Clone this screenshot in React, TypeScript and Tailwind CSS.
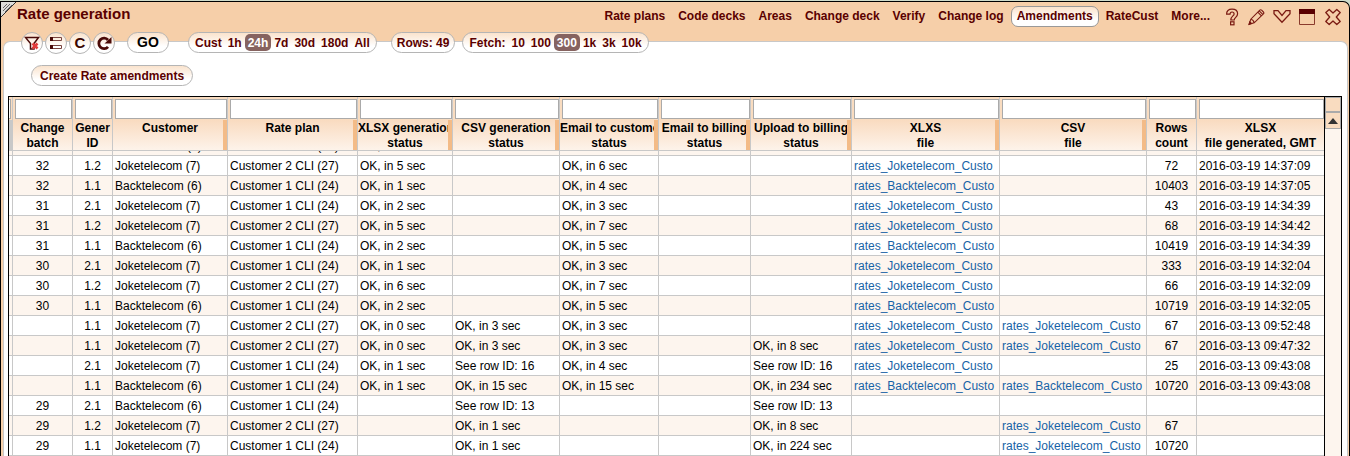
import clsx from "clsx";

type Column = {
    label: string[];
    width: string;
    center?: boolean;
    resizable?: boolean;
};

const columns: Column[] = [
    { label: ["Change", "batch"], width: "w-[60px]", center: true },
    { label: ["Gener", "ID"], width: "w-[40px]", center: true },
    { label: ["Customer"], width: "w-[115px]", resizable: true },
    { label: ["Rate plan"], width: "w-[130px]", resizable: true },
    { label: ["XLSX generation", "status"], width: "w-[95px]", resizable: true },
    { label: ["CSV generation", "status"], width: "w-[107px]", resizable: true },
    { label: ["Email to customer", "status"], width: "w-[99px]", resizable: true },
    { label: ["Email to billing", "status"], width: "w-[92px]", resizable: true },
    { label: ["Upload to billing", "status"], width: "w-[101px]", resizable: true },
    { label: ["XLXS", "file"], width: "w-[148px]", resizable: true },
    { label: ["CSV", "file"], width: "w-[147px]", resizable: true },
    { label: ["Rows", "count"], width: "w-[50px]", center: true },
    { label: ["XLSX", "file generated, GMT"], width: "" },
];

const joke = "Joketelecom (7)";
const back = "Backtelecom (6)";
const cli1 = "Customer 1 CLI (24)";
const cli2 = "Customer 2 CLI (27)";
const jokeFile = "rates_Joketelecom_Custo";
const backFile = "rates_Backtelecom_Custo";

const rows: string[][] = [
    ["", "", back, cli1, "OK, in 1 sec", "", "", "", "", "", "", "", ""],
    ["32", "1.2", joke, cli2, "OK, in 5 sec", "", "OK, in 6 sec", "", "", jokeFile, "", "72", "2016-03-19 14:37:09"],
    ["32", "1.1", back, cli1, "OK, in 1 sec", "", "OK, in 4 sec", "", "", backFile, "", "10403", "2016-03-19 14:37:05"],
    ["31", "2.1", joke, cli1, "OK, in 2 sec", "", "OK, in 3 sec", "", "", jokeFile, "", "43", "2016-03-19 14:34:39"],
    ["31", "1.2", joke, cli2, "OK, in 5 sec", "", "OK, in 7 sec", "", "", jokeFile, "", "68", "2016-03-19 14:34:42"],
    ["31", "1.1", back, cli1, "OK, in 2 sec", "", "OK, in 5 sec", "", "", backFile, "", "10419", "2016-03-19 14:34:39"],
    ["30", "2.1", joke, cli1, "OK, in 1 sec", "", "OK, in 3 sec", "", "", jokeFile, "", "333", "2016-03-19 14:32:04"],
    ["30", "1.2", joke, cli2, "OK, in 6 sec", "", "OK, in 7 sec", "", "", jokeFile, "", "66", "2016-03-19 14:32:09"],
    ["30", "1.1", back, cli1, "OK, in 2 sec", "", "OK, in 5 sec", "", "", backFile, "", "10719", "2016-03-19 14:32:05"],
    ["", "1.1", joke, cli2, "OK, in 0 sec", "OK, in 3 sec", "OK, in 3 sec", "", "", jokeFile, jokeFile, "67", "2016-03-13 09:52:48"],
    ["", "1.1", joke, cli2, "OK, in 0 sec", "OK, in 3 sec", "OK, in 3 sec", "", "OK, in 8 sec", jokeFile, jokeFile, "67", "2016-03-13 09:47:32"],
    ["", "2.1", joke, cli1, "OK, in 1 sec", "See row ID: 16", "OK, in 4 sec", "", "See row ID: 16", jokeFile, "", "25", "2016-03-13 09:43:08"],
    ["", "1.1", back, cli1, "OK, in 1 sec", "OK, in 15 sec", "OK, in 15 sec", "", "OK, in 234 sec", backFile, backFile, "10720", "2016-03-13 09:43:08"],
    ["29", "2.1", back, cli1, "", "See row ID: 13", "", "", "See row ID: 13", "", "", "", ""],
    ["29", "1.2", joke, cli2, "", "OK, in 1 sec", "", "", "OK, in 8 sec", "", jokeFile, "67", ""],
    ["29", "1.1", joke, cli1, "", "OK, in 1 sec", "", "", "OK, in 224 sec", "", jokeFile, "10720", ""],
];

const navItems = [
    "Rate plans",
    "Code decks",
    "Areas",
    "Change deck",
    "Verify",
    "Change log",
    "Amendments",
    "RateCust",
    "More...",
];

const pill = "flex h-[21px] items-center rounded-full border border-[#b5b5b5] bg-linear-to-b from-[#fae3cd] to-white to-70%";
const roundButton = "flex size-[22px] items-center justify-center rounded-full border border-[#b5b5b5] bg-linear-to-b from-[#fae3cd] to-white to-70%";

function TitleBar() {
    return (
        <header className="flex h-[39px] shrink-0 items-start justify-between pr-2 pl-4">
            <h1 className="pt-[3px] text-[15px] leading-[18px]">Rate generation</h1>
            <div className="flex items-center pt-1">
                <nav className="flex gap-px">
                    {navItems.map((item) => (
                        <a
                            key={item}
                            href="#"
                            className={clsx(
                                "h-[21px] rounded-[7px] border px-[5px] leading-[19px]",
                                item === "Amendments"
                                    ? "border-[#999] bg-linear-to-b from-[#fae3cd] to-white to-70%"
                                    : "border-transparent",
                            )}
                        >
                            {item}
                        </a>
                    ))}
                </nav>
                <div className="flex items-center gap-2 pl-2">
                    <button aria-label="Help">
                        <svg width="16" height="18" viewBox="0 0 16 18" fill="none" stroke="#7a1a12" strokeWidth="1.2">
                            <path d="M2.6 6.2C2.4 3 4.6 1.2 8 1.2s5.600 1.700 5.600 4.600c0 3.400-3.400 3.600-3.400 6.200H6.800c0-3.900 3.300-4.100 3.300-6.100C10.100 4.600 9.200 4 8 4S6 4.800 6 6.200z" />
                            <rect x="6.600" y="13.800" width="3.400" height="3" />
                        </svg>
                    </button>
                    <button aria-label="Edit">
                        <svg width="17" height="18" viewBox="0 0 17 18" fill="none" stroke="#7a1a12" strokeWidth="1.1">
                            <path d="M1.200 16.200 2.800 11.200 11.800 2.200Q12.700 1.300 13.600 2.200L15.400 4Q16.300 4.900 15.400 5.800L6.200 14.800zM2.800 11.200Q5.500 11.600 6.200 14.800M9.800 4.200l3.600 3.600M11.200 2.800l3.600 3.600" />
                            <path d="m1 16.400.800-2.600 1.800 1.800z" fill="#5a0500" />
                        </svg>
                    </button>
                    <button aria-label="Collapse">
                        <svg width="18" height="18" viewBox="0 0 18 18" fill="none" stroke="#7a1a12" strokeWidth="1.300">
                            <path d="M1 2.700h4L9 7.500l4-4.800h4v3L9 14.300 1 5.700z" />
                        </svg>
                    </button>
                    <button aria-label="Maximize">
                        <svg width="16" height="18" viewBox="0 0 16 18">
                            <path d="M.5 1.500h15v15H.5z" fill="none" stroke="#8a3a2c" />
                            <path d="M0 1h16v5H0z" fill="#5a0000" />
                        </svg>
                    </button>
                    <button aria-label="Close" className="pl-0.5">
                        <svg width="16" height="18" viewBox="0 0 16 18" fill="none" stroke="#7a1a12" strokeWidth="1.300" strokeLinejoin="round">
                            <path d="M4.200 1.500 8 5l3.800-3.500L15.200 4.500 11.300 9l3.900 4.500-3.400 3L8 13l-3.800 3.500-3.400-3L4.700 9 .8 4.500z" />
                        </svg>
                    </button>
                </div>
            </div>
        </header>
    );
}

function Choices({ items, active }: { items: string[]; active: string }) {
    return items.map((item) => (
        <button
            key={item}
            className={clsx("h-[17px] rounded-[5px] px-[3px]", item === active && "bg-[#866360] text-white")}
        >
            {item}
        </button>
    ));
}

function Toolbar() {
    return (
        <div className="-mt-2.5 flex items-start pl-[17px]">
            <div className="flex gap-0.5">
                <button aria-label="Clear filter" className={roundButton}>
                    <svg width="16" height="16" viewBox="0 0 16 16" fill="none">
                        <path d="M1.500 2.500h13L10 8.500V14H6.500V8.500z" stroke="#4a0a08" strokeWidth="1.500" />
                        <path d="m8.500 8.500 5 5m0-5-5 5" stroke="#e23b3b" strokeWidth="2.600" />
                    </svg>
                </button>
                <button aria-label="Row view" className={roundButton}>
                    <svg width="14" height="14" viewBox="0 0 14 14" fill="none" stroke="#7a4540">
                        <path d="M1.500 1.500h11v3h-11zM1.500 9.500h11v3h-11z" />
                        <path d="M1 3h3M1 11h3" stroke="#4a0a08" strokeWidth="4" />
                    </svg>
                </button>
                <button className={clsx(roundButton, "text-[15px] text-[#3a0500]")}>C</button>
                <button aria-label="Reload" className={roundButton}>
                    <svg width="16" height="16" viewBox="0 0 16 16" fill="none">
                        <path d="M12 11.800A5.200 5.200 0 1 1 12 5" stroke="#4a0a08" strokeWidth="2.800" />
                        <path d="M15.500 2v6.500H8.500z" fill="#4a0a08" />
                    </svg>
                </button>
            </div>
            <button className={clsx(pill, "ml-3 w-[42px] justify-center text-[14px] text-black")}>GO</button>
            <div className={clsx(pill, "ml-[19px] px-[3px]")}>
                <Choices items={["Cust", "1h", "24h", "7d", "30d", "180d", "All"]} active="24h" />
            </div>
            <div className={clsx(pill, "ml-3.5 px-[5px]")}>Rows: 49</div>
            <div className={clsx(pill, "ml-[7px] px-[3px]")}>
                <span className="px-[3px]">Fetch:</span>
                <Choices items={["10", "100", "300", "1k", "3k", "10k"]} active="300" />
            </div>
        </div>
    );
}

function ColumnWidths() {
    return (
        <colgroup>
            <col className="w-[4px]" />
            {columns.map((column, index) => (
                <col key={index} className={column.width} />
            ))}
        </colgroup>
    );
}

function HeadTable() {
    return (
        <table className="relative w-full table-fixed border-separate border-spacing-0 bg-[#f9dcc0] text-black">
            <ColumnWidths />
            <thead>
                <tr className="h-[23px]">
                    <td className="border-r border-[#c8c8c8] p-0 pt-0.5 align-top">
                        <div className="mr-px h-5 border border-l-0 border-[#aaa] bg-white" />
                    </td>
                    {columns.map((column, index) => (
                        <td key={index} className="border-r border-[#c8c8c8] p-0 pt-0.5 pl-0.5 align-top last:border-r-0">
                            <input
                                aria-label={`Filter ${column.label.join(" ")}`}
                                className="block h-5 w-full border border-[#aaa] bg-white px-1 font-normal outline-none"
                            />
                        </td>
                    ))}
                </tr>
                <tr className="h-[31px]">
                    <td className="border-r border-b border-[#c8c8c8] bg-[#c8c8c8] p-0" />
                    {columns.map((column, index) => (
                        <th
                            key={index}
                            className="relative border-r border-b border-[#c8c8c8] bg-linear-to-b from-[#f9dbc0] to-[#fdf3ea] p-0 align-top leading-[15px] last:border-r-0"
                        >
                            <div className="h-[30px] overflow-hidden pt-px whitespace-nowrap">
                                {column.label.map((line) => (
                                    <div key={line}>{line}</div>
                                ))}
                            </div>
                            {column.resizable && (
                                <span className="absolute inset-y-0 right-0 w-1 cursor-col-resize bg-[#f3bb87]" />
                            )}
                        </th>
                    ))}
                </tr>
            </thead>
        </table>
    );
}

function BodyTable() {
    return (
        <table className="-mt-[15px] w-full table-fixed border-separate border-spacing-0 font-normal text-black">
            <ColumnWidths />
            <tbody>
                {rows.map((row, rowIndex) => (
                    <tr key={rowIndex} className="h-5 even:bg-white odd:bg-[#fdf5ee]">
                        <td className="border-r border-b border-[#c8c8c8] p-0" />
                        {row.map((value, index) => (
                            <td
                                key={index}
                                className={clsx(
                                    "overflow-hidden border-r border-b border-[#c8c8c8] p-0 pt-px leading-[18px] whitespace-nowrap last:border-r-0",
                                    columns[index].center ? "text-center" : "pl-0.5",
                                )}
                            >
                                {value.startsWith("rates_") ? (
                                    <a href="#" className="text-[#1763a6]">{value}</a>
                                ) : (
                                    value
                                )}
                            </td>
                        ))}
                    </tr>
                ))}
            </tbody>
        </table>
    );
}

export default function App() {
    return (
        <div className="h-screen overflow-hidden bg-[#cfdccb] pt-px font-['Liberation_Sans',Arial,sans-serif] text-[12px] font-bold text-[#5a0000]">
            <div className="relative flex h-full flex-col rounded-t-[7px] border border-b-0 border-black bg-[#f6cfa9]">
                <svg className="absolute -top-px -left-px" width="18" height="18" viewBox="0 0 18 18" fill="none">
                    <path d="M0 0h17L0 17z" fill="#dededa" />
                    <path d="M16.500.500 0 17" stroke="#333" />
                    <path d="M10 3 3 10M7 3 3 7M12 4 5 11" stroke="#666" />
                    <path d="M0 .5h17M.5 0v17" stroke="#000" />
                </svg>
                <TitleBar />
                <main className="mr-px ml-0.5 flex min-h-0 flex-1 flex-col rounded-t-[7px] border border-b-0 border-[#c8c8c8] bg-white">
                    <Toolbar />
                    <div className="pt-[11px] pb-2.5 pl-[27px]">
                        <button className={clsx(pill, "px-2")}>Create Rate amendments</button>
                    </div>
                    <div className="mr-[5px] ml-1 flex min-h-0 flex-1 border border-b-0 border-black">
                        <div className="min-w-0 flex-1 overflow-hidden">
                            <HeadTable />
                            <BodyTable />
                        </div>
                        <div className="flex w-[17px] shrink-0 flex-col border-l border-black bg-[#fdf5ee]">
                            <div className="h-4 border border-b-2 border-[#aaa] bg-[#f9dcc0]" />
                            <button aria-label="Scroll up" className="flex h-4 items-center justify-center border border-t-0 border-[#aaa] bg-[#f9dcc0]">
                                <svg width="10" height="6" viewBox="0 0 10 6">
                                    <path d="M5 0l5 6H0z" fill="#333" />
                                </svg>
                            </button>
                        </div>
                    </div>
                </main>
            </div>
        </div>
    );
}
